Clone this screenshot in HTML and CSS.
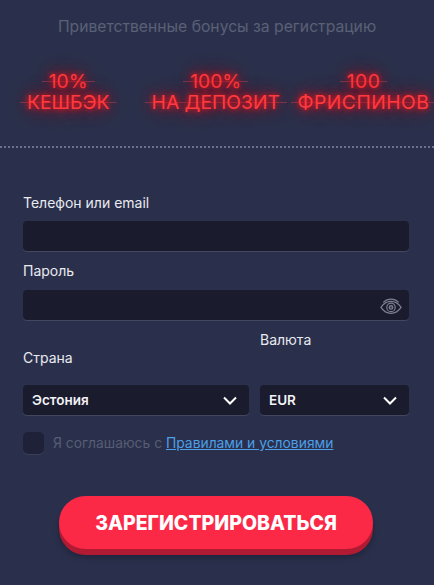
FILE: index.html
```html
<!DOCTYPE html>
<html lang="ru">
<head>
<meta charset="utf-8">
<title>Регистрация</title>
<link rel="stylesheet" href="styles.css">
</head>
<body>
<main class="page">
  <h2 class="title">Приветственные бонусы за регистрацию</h2>
  <section class="bonuses">
    <div class="bonus bonus-a"><span class="neon">10%</span><span class="neon">КЕШБЭК</span></div>
    <div class="bonus bonus-b"><span class="neon">100%</span><span class="neon">НА ДЕПОЗИТ</span></div>
    <div class="bonus bonus-c"><span class="neon">100</span><span class="neon">ФРИСПИНОВ</span></div>
  </section>
  <hr class="dots">
  <form class="form">
    <label class="label">Телефон или email</label>
    <div class="field"></div>
    <label class="label label-pass">Пароль</label>
    <div class="field field-pass">
      <svg class="eye" viewBox="0 0 24 18" width="22" height="17" fill="none" stroke="#7b7f8f" stroke-width="1.3">
        <path d="M1 10c3-4.500 7-6.500 11-6.500S20 5.500 23 10c-3 4.500-7 6.500-11 6.500S4 14.500 1 10z"/>
        <path d="M3.500 4.500C6 2.200 9 1 12 1s6 1.200 8.500 3.500"/>
        <circle cx="12" cy="10" r="4.600"/>
        <circle cx="12" cy="10" r="2" fill="#7b7f8f" fill-opacity=".45"/>
      </svg>
    </div>
    <div class="selects">
      <div class="col col-country">
        <label class="label">Страна</label>
        <div class="field select"><span>Эстония</span>
          <svg class="chev" viewBox="0 0 14 9" width="14" height="9" fill="none" stroke="#fff" stroke-width="2"><path d="M1 1.500l6 6 6-6"/></svg>
        </div>
      </div>
      <div class="col col-currency">
        <label class="label">Валюта</label>
        <div class="field select"><span>EUR</span>
          <svg class="chev" viewBox="0 0 14 9" width="14" height="9" fill="none" stroke="#fff" stroke-width="2"><path d="M1 1.500l6 6 6-6"/></svg>
        </div>
      </div>
    </div>
    <div class="agree">
      <span class="check"></span>
      <span class="agree-text">Я соглашаюсь с <a href="#">Правилами и условиями</a></span>
    </div>
    <button type="button" class="submit">ЗАРЕГИСТРИРОВАТЬСЯ</button>
  </form>
</main>
</body>
</html>
```
FILE: styles.css
```css
* { box-sizing: border-box; }
html, body { margin: 0; padding: 0; }
body {
  width: 434px;
  height: 585px;
  overflow: hidden;
  background: #2a304b;
  font-family: "Inter", "Noto Sans", sans-serif;
}
.page { display: flex; flex-direction: column; height: 585px; }
.title {
  margin: 0;
  padding-top: 18px;
  height: 66px;
  text-align: center;
  font-size: 15.700px;
  line-height: 18px;
  font-weight: 400;
  color: #5a6076;
}
.bonuses { display: flex; height: 69px; padding-top: 5px; }
.bonus {
  display: flex;
  flex-direction: column;
  align-items: center;
  font-size: 19.300px;
  line-height: 21px;
  color: #ff3a3f;
  text-shadow: 0 0 5px #f3141c, 0 0 11px #d5101a, 0 0 20px #a01020;
}
.bonus-a { width: 137px; }
.bonus-b { width: 157px; margin-left: 1px; }
.bonus-c { width: 141px; margin-left: -1px; letter-spacing: .5px; }
.neon {
  padding: 0 7px;
  white-space: nowrap;
  background: linear-gradient(rgba(255, 80, 90, .35), rgba(255, 80, 90, .35)) center / 100% 1px no-repeat;
}
.dots {
  margin: 11px 0 0;
  height: 0;
  border: 0;
  border-top: 2px dotted #6b7190;
}
.form { display: flex; flex-direction: column; padding: 46px 25px 0 23px; }
.label { font-size: 14px; line-height: 18px; color: #e9eaf0; display: block; }
.field {
  height: 30px;
  margin-top: 9px;
  border-radius: 4px;
  background: #1b1b2e;
  box-shadow: 0 1px 0 #42465f;
  position: relative;
}
.label-pass { margin-top: 11px; }
.field-pass { margin-top: 10px; }
.eye { position: absolute; right: 7px; top: 8px; }
.selects { display: flex; gap: 11px; align-items: flex-start; margin-top: 11px; }
.col-country { width: 226px; padding-top: 18px; }
.col-country .field { margin-top: 18px; }
.col-currency { width: 149px; }
.col-currency .field { margin-top: 36px; }
.select {
  display: flex;
  align-items: center;
  justify-content: space-between;
  padding: 0 12px 0 9px;
  font-size: 13.500px;
  font-weight: 600;
  color: #f2f2f6;
}
.agree { display: flex; align-items: center; gap: 9px; margin-top: 17px; }
.check {
  width: 21px;
  height: 22px;
  border-radius: 5px;
  background: #1e2138;
  box-shadow: 0 1px 0 #3a3f58;
}
.agree-text { font-size: 13.850px; color: #565c74; }
.agree-text a { color: #4c9fe8; }
.submit {
  align-self: center;
  width: 314px;
  height: 53px;
  margin: 42px 0 0;
  border: 0;
  border-radius: 27px;
  background: #fb2846;
  box-shadow: 0 6px 0 #b01b33, 0 8px 6px rgba(10, 12, 30, .35);
  font-family: "Inter", "Noto Sans", sans-serif;
  font-size: 19.500px;
  font-weight: 800;
  color: #fff;
}
```
